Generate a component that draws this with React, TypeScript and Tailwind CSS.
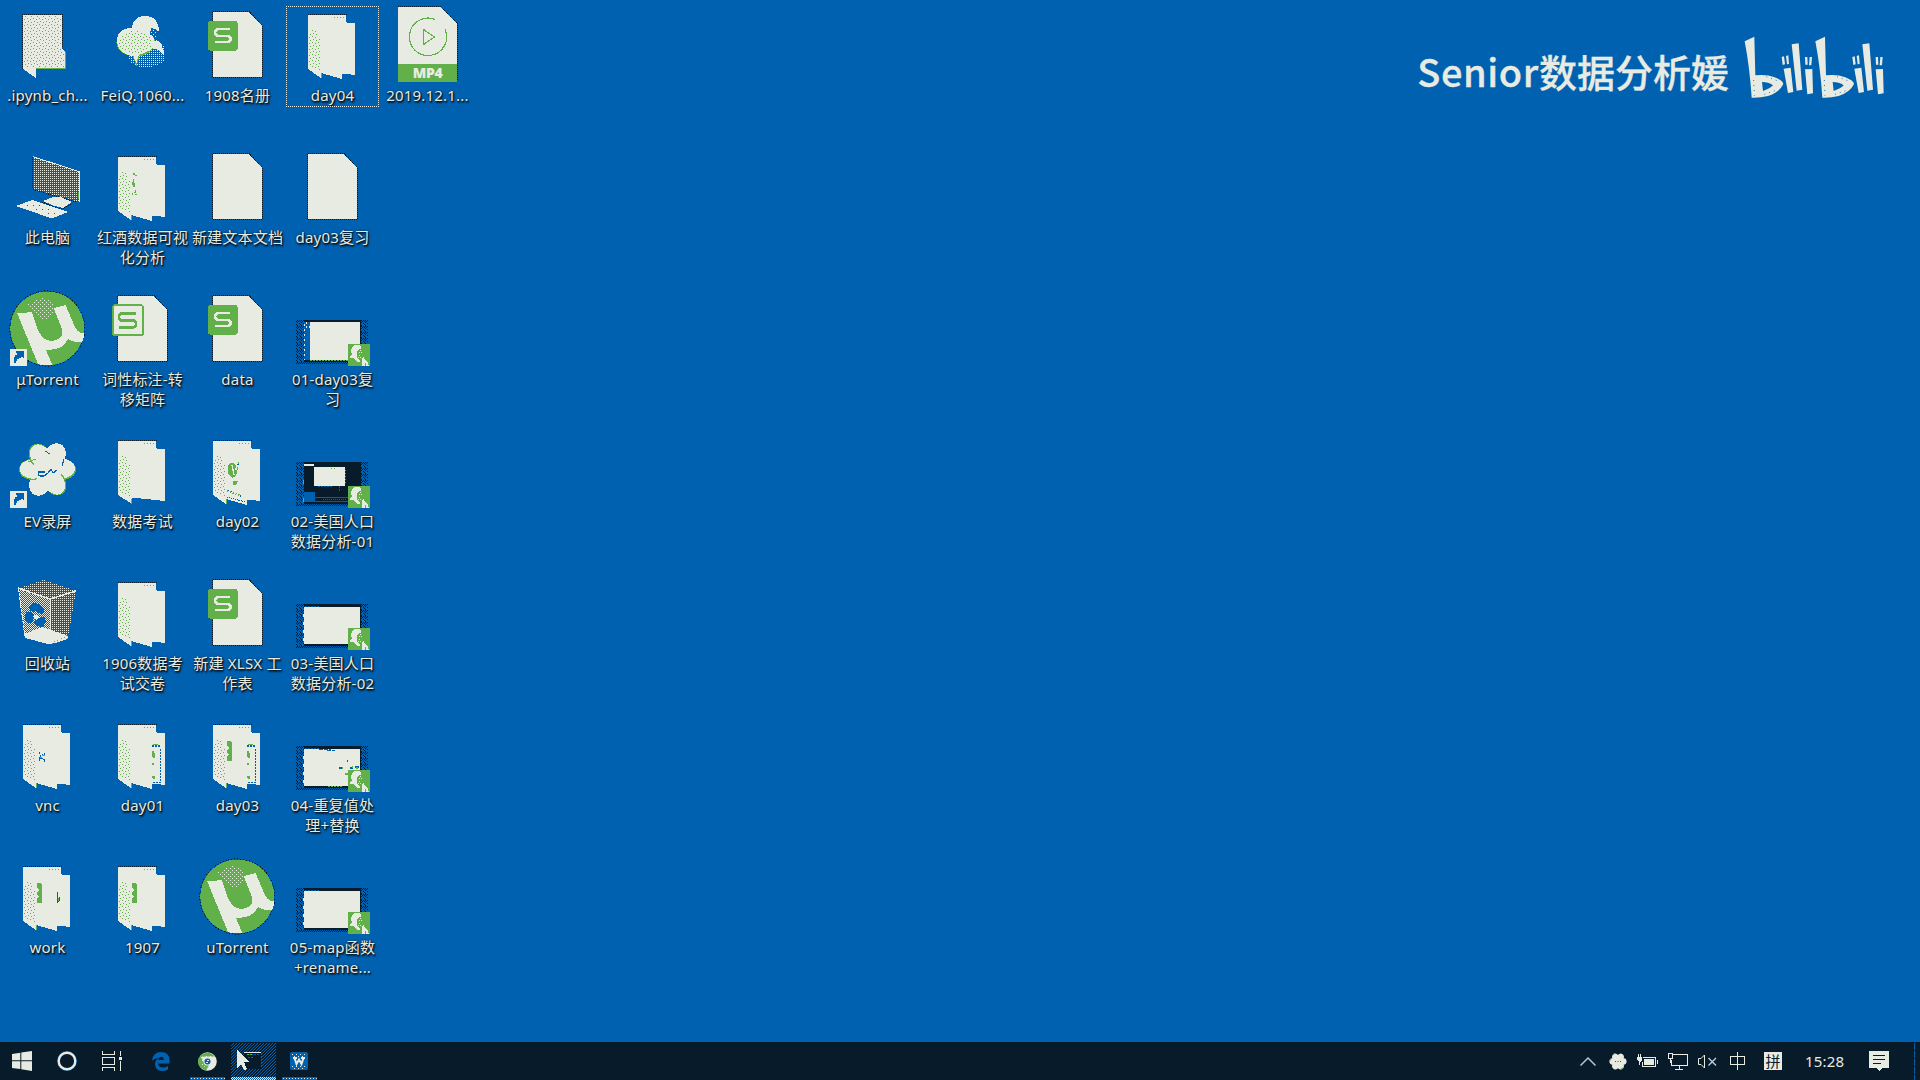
import React from "react";

const W = "#e8ebe2";
const G = "#62b04a";
const B = "#0061b1";
const D = "#081b2b";

function Patterns() {
  return (
    <svg className="absolute size-0" aria-hidden="true">
      <defs>
        <pattern id="gdots" width="6" height="6" patternUnits="userSpaceOnUse">
          <rect x="0" y="1" width="1" height="1" fill={G} />
          <rect x="3" y="0" width="1" height="1" fill={G} />
          <rect x="1" y="4" width="1" height="1" fill={G} />
          <rect x="4" y="3" width="1" height="1" fill={G} />
        </pattern>
        <pattern id="wdots" width="2" height="2" patternUnits="userSpaceOnUse">
          <rect width="1" height="1" fill={W} />
        </pattern>
        <pattern id="wcheck" width="2" height="2" patternUnits="userSpaceOnUse">
          <rect width="1" height="1" fill={W} />
          <rect x="1" y="1" width="1" height="1" fill={W} />
        </pattern>
        <pattern id="wsparse" width="4" height="4" patternUnits="userSpaceOnUse">
          <rect width="1" height="1" fill={W} />
          <rect x="2" y="2" width="1" height="1" fill={W} />
        </pattern>
        <pattern id="film" width="4" height="6" patternUnits="userSpaceOnUse">
          <path d="M0 0h1v1h-1zM2 0h1v1h-1zM1 1h1v1h-1zM3 1h1v1h-1zM0 2h1v1h-1zM2 3h1v1h-1zM3 4h1v1h-1zM0 5h1v1h-1z" fill={D} />
        </pattern>
        <pattern id="hover" width="3" height="3" patternUnits="userSpaceOnUse">
          <path d="M0 0h1v1h-1zM2 1h1v1h-1zM1 2h1v1h-1z" fill={B} />
        </pattern>
      </defs>
    </svg>
  );
}

function Doc() {
  return (
    <g>
      <path d="M22.5 11.5H59L72.5 25.5V77.5H22.5Z" fill="none" stroke={D} strokeDasharray="1 1" />
      <path d="M23 12H58.7L72 26V77H23Z" fill={W} />
    </g>
  );
}

function Sheet({ outline }: { outline?: boolean }) {
  return (
    <g>
      <Doc />
      {outline ? (
        <g>
          <rect x="18" y="21" width="30" height="30" rx="2.500" fill={W} stroke={G} strokeWidth="2" />
          <path d="M41 29.500H27.500Q24 29.500 24 33Q24 36.500 27.500 36.500H37.500Q41 36.500 41 40Q41 43.500 37.500 43.500H23.500" fill="none" stroke={G} strokeWidth="2.600" />
        </g>
      ) : (
        <g>
          <rect x="18" y="21" width="29.700" height="29.700" rx="3" fill={G} />
          <path d="M40 29H28.500Q25 29 25 32.500Q25 36 28.500 36H37Q40.500 36 40.500 39Q40.500 42 37 42H24.500" fill="none" stroke={W} strokeWidth="2.600" />
        </g>
      )}
    </g>
  );
}

function Folder({ children, single }: { children?: React.ReactNode; single?: boolean }) {
  return (
    <g>
      <path d="M23 14.500H61.500" stroke={D} strokeDasharray="1 1" />
      <path
        d={
          single
            ? "M23 15H61V22L63 23H70V75L37 71.500V78L23 69Z"
            : "M23 15H61V22L63 23H70V75L57 73.500V79L36 73V78L23 69Z"
        }
        fill={W}
      />
      <path d="M24 36L29 28L36 42V72L24 66Z" fill="url(#gdots)" />
      <path d="M36.500 72.500V78" stroke={G} />
      <path d="M49 17.500H60" stroke={G} strokeDasharray="1 2" />
      {children}
    </g>
  );
}

function OpenFolder() {
  return (
    <g>
      <path d="M22.500 69V14.500H62.500V48" fill="none" stroke={D} strokeDasharray="1 1" />
      <path d="M23 15H62V49L66 52V68H36V78L23 69Z" fill={W} />
      <path d="M24 16H61V49L64 52V67H24Z" fill="url(#gdots)" />
      <path d="M65.500 52V68M36 68.500H66" stroke={G} />
    </g>
  );
}

function GreenTab() {
  return <path d="M37 31H40.500L42 33V51H37V46L39 45L37 43V40L39 38L37 36Z" fill={G} />;
}

function PageEdge() {
  return (
    <g>
      <path d="M57 35.500H65" stroke={B} strokeWidth="2" strokeDasharray="2 1" />
      <path d="M58 34.500H63" stroke={G} />
      <path d="M57 41H59L60 44V48H58L57 46ZM57 53H59V55H57ZM57 66H60V69H58Z" fill={G} />
      <path d="M65.500 39V72.500H57" fill="none" stroke={B} strokeDasharray="2 1" />
    </g>
  );
}

function Shortcut() {
  return (
    <g>
      <rect x="10" y="65" width="17" height="17" fill={W} />
      <path d="M14 79Q12 72 18 70L15 68L17 67H24V74L22 73L20 74Q16 75 16 79Z" fill={B} />
    </g>
  );
}

function Torrent() {
  return (
    <g>
      <circle cx="47.300" cy="44.500" r="37.600" fill="none" stroke={D} strokeDasharray="1 2" />
      <circle cx="47.300" cy="44.500" r="37" fill={G} />
      <path
        d="M17.300 29.500L32 28L38 46Q43 57 52 57Q60 56 62 51L62.500 46L53.500 24L65.500 21L74 41Q77 49 84 49.300Q84 54 82 58Q74 59 68 55Q63 65 52 65.500L46 66L52.300 81.200Q44 82 38 80Z"
        fill={W}
      />
      <path d="M28 20L40 14L50 16L54 23L52 34L41 36Z" fill="url(#wsparse)" />
    </g>
  );
}

function Badge() {
  return (
    <g>
      <rect x="63" y="60" width="22" height="22" rx="1" fill={G} />
      <path d="M67 64L69 61H74L76 63V65H74L73 67H72V72L73 75L75 76V78H73L70 76L68 74H65V72L67 70L66 67Z" fill={W} />
      <path d="M74 68.500H77M74 71.500H76M73 73.500H77M75 66.500H77" stroke={W} strokeDasharray="1 1" />
      <path d="M77 74L79 73L80 76L82 77L83 79L84 82H77Z" fill={W} />
      <path d="M80.500 79V82" stroke={G} />
    </g>
  );
}

function Film({ variant }: { variant: number }) {
  return (
    <g>
      <rect x="11" y="36" width="72" height="44" fill="url(#film)" />
      <rect x="19" y="36" width="57" height="42" fill={D} />
      {variant === 1 && (
        <g>
          <rect x="19" y="38" width="6" height="38" fill={B} />
          <path d="M19.500 40V76" stroke={W} strokeDasharray="2 3" />
          <path d="M21.500 38V45M24.500 42V46" stroke={W} strokeDasharray="2 2" />
          <rect x="25" y="38" width="50" height="38" fill={W} />
          <path d="M25 76.500H63" stroke={G} strokeDasharray="2 1" />
        </g>
      )}
      {variant === 2 && (
        <g>
          <rect x="19" y="38" width="10" height="2" fill={W} />
          <rect x="29" y="41" width="31" height="19" fill={W} />
          <path d="M46 42.500H51M60.500 44V58" stroke={G} strokeDasharray="1 2" />
          <path d="M54.500 60V66M33 60.500H48" stroke={B} strokeDasharray="2 1" />
          <path d="M19 66H30V71H63V72H30V76H19ZM30 75H63V76H30Z" fill={B} />
          <path d="M38 73.500H62" stroke={B} strokeDasharray="1 1" />
          <path d="M18.500 72V76M18.500 54V58" stroke={G} />
        </g>
      )}
      {variant > 2 && (
        <g>
          <rect x="19" y="39" width="56" height="37" fill={W} />
          <path d="M20 38.500H34" stroke={B} strokeDasharray="2 1" />
          <path d="M18.500 46V73" stroke={W} strokeDasharray="3 5" />
        </g>
      )}
      {variant === 4 && (
        <g>
          <path d="M34 39.500H46M42 40.500H50" stroke={B} strokeDasharray="4 1" />
          <path d="M54 58H58M65 58H68M70 57H74M62 50.500H63" stroke={B} strokeWidth="2" />
          <path d="M57 58H58M67 57H68M60 64H63M71 58H73" stroke={G} strokeWidth="2" />
          <path d="M43 76.500H58" stroke={G} strokeDasharray="2 1" />
        </g>
      )}
      <Badge />
    </g>
  );
}

function Computer() {
  return (
    <g>
      <path d="M33 15L79.700 30L79 60L33 47Z" fill="url(#wdots)" />
      <path d="M33 14.700L79.500 29.700V60" fill="none" stroke={W} />
      <path d="M33 47.500L76 60M32.500 15V47" fill="none" stroke={D} strokeDasharray="1 1" />
      <path d="M78.500 50V57" stroke={G} />
      <path d="M43 59L52 55.500L61 55L72 60L63 66L53 63.500Z" fill={W} />
      <path d="M42 60L52 64L62 67L72 62" fill="none" stroke={D} strokeDasharray="1 1" />
      <path d="M16 64L32 58L68 70L52 76.500Z" fill={W} />
      <path d="M27 63.500H40M36 67.500H54M48 71.500H58" stroke={B} strokeDasharray="1 5" />
    </g>
  );
}

function Bin() {
  return (
    <g>
      <path d="M18 20L43 12L76 23L68 69L50 76L25 69Z" fill="url(#wdots)" />
      <path d="M19 22L50 31V76L25 69Z" fill="url(#wcheck)" />
      <path d="M18 20L50 31L76 23" fill="none" stroke={W} strokeWidth="1.500" />
      <path d="M18.500 21L25 69M50.500 31V62" fill="none" stroke={W} strokeDasharray="3 1" />
      <path d="M25 66L42 59L68 68V71L50 76.500L25 70Z" fill={W} />
      <path d="M52 72L68 67V71L52 76Z" fill="url(#gdots)" />
      <path d="M29 39L34 35L41 37L44 42L43 46L38 45L36 42L33 44L30 43Z" fill={B} />
      <path d="M26 44L32 44L35 48L32 54L28 56L25 51Z" fill={B} />
      <path d="M36 50L44 49L46 54L43 59L37 58L34 54Z" fill={B} />
      <path d="M33 48L37 46L39 50L36 52Z" fill={W} />
    </g>
  );
}

function Flower() {
  const angles = [0, 60, 118, 180, 240, 298];
  return (
    <g>
      {angles.map((a) => (
        <g key={a} transform={`rotate(${a} 47.500 43.500)`}>
          <ellipse cx="62.500" cy="43.500" rx="13.500" ry="10.500" fill={a % 180 < 90 ? G : W} />
          <ellipse cx="62" cy={a === 0 ? 42.5 : 44} rx="13" ry="9.800" fill={W} />
        </g>
      ))}
      <circle cx="47.500" cy="43.500" r="14" fill={W} />
      <path d="M38 46H45M38.500 46V49L40 50H44L48 47L51 43L53 47L57 44" fill="none" stroke={B} strokeWidth="1.200" />
      <path d="M45 25L50 28M64 33L62 40" stroke={B} />
      <path d="M28 36L36 33" stroke={G} />
    </g>
  );
}

function Birds() {
  return (
    <g>
      <path d="M33 58Q40 48 60 48L68 42Q71 55 69 62Q60 68 47 67Q38 67 33 58Z" fill="url(#wdots)" />
      <ellipse cx="40.700" cy="42.500" rx="19.300" ry="14" fill={G} />
      <path d="M22 41Q22 28 37 28Q38 16 51 16Q63 17 64 30L58 36L60 42L56 50L44 55L41.500 64L38 56Q23 54 22 41Z" fill={W} />
      <ellipse cx="40.500" cy="42" rx="17" ry="11" fill="url(#gdots)" />
      <path d="M38 56L41.500 65L44 56" fill="none" stroke={G} />
      <path d="M61 40L65 42Q69 49 69.500 56Q64 49 57 48Z" fill={W} />
      <path d="M56 28L63 30L61 37L55 35Z" fill={B} />
      <path d="M56 29L63 30L61 37L56 35Z" fill="url(#wsparse)" />
    </g>
  );
}

function Mp4() {
  return (
    <g>
      <path d="M18 6.500H60L77 23.500V81" fill="none" stroke={D} strokeDasharray="1 1" />
      <path d="M18 7H60L76.500 23V65H18Z" fill={W} />
      <rect x="18" y="64" width="58.500" height="17.700" fill={G} />
      <path d="M55 19.500A18.700 18.700 0 1 0 65.200 29.500" fill="none" stroke={G} strokeWidth="1.200" />
      <path d="M43.500 29.500L54.500 37L43.500 44.500Z" fill="none" stroke={G} strokeWidth="1.200" />
      <text x="47.800" y="78" textAnchor="middle" fontSize="14" fontWeight="800" fontFamily="Open Sans" fill={W} textLength="30">MP4</text>
    </g>
  );
}

type Item = { icon: React.ReactNode; lines: string[]; focus?: boolean };

const columns: Item[][] = [
  [
    { icon: <OpenFolder />, lines: [".ipynb_ch..."] },
    { icon: <Computer />, lines: ["此电脑"] },
    { icon: <g><Torrent /><Shortcut /></g>, lines: ["μTorrent"] },
    { icon: <g><Flower /><Shortcut /></g>, lines: ["EV录屏"] },
    { icon: <Bin />, lines: ["回收站"] },
    {
      icon: (
        <Folder>
          <path d="M39 42V44M40 45V49M42 44V46M44 43V45M41 48H43M43 49H45M39 47V51M44 50V52" stroke={B} fill="none" />
          <path d="M42 45.500H45M40 47.500H42" stroke={G} />
        </Folder>
      ),
      lines: ["vnc"],
    },
    {
      icon: (
        <Folder>
          <GreenTab />
          <path d="M57.500 40V51M59 45L60 47L58 50" stroke={B} fill="none" />
          <path d="M58.500 46V49" stroke={G} />
        </Folder>
      ),
      lines: ["work"],
    },
  ],
  [
    { icon: <Birds />, lines: ["FeiQ.1060..."] },
    {
      icon: (
        <Folder>
          <path d="M38 31H40V33H38ZM40 33H42V34H40ZM38 37H39V41H40V45H38V43H37V40H38ZM40 48H41V51H38V53H37V51H39V50H40ZM40 52H42V53H40Z" fill={G} />
        </Folder>
      ),
      lines: ["红酒数据可视", "化分析"],
    },
    { icon: <Sheet outline />, lines: ["词性标注-转", "移矩阵"] },
    { icon: <Folder single />, lines: ["数据考试"] },
    { icon: <Folder />, lines: ["1906数据考", "试交卷"] },
    { icon: <Folder><PageEdge /></Folder>, lines: ["day01"] },
    { icon: <Folder><GreenTab /></Folder>, lines: ["1907"] },
  ],
  [
    { icon: <Sheet />, lines: ["1908名册"] },
    { icon: <Doc />, lines: ["新建文本文档"] },
    { icon: <Sheet />, lines: ["data"] },
    {
      icon: (
        <Folder>
          <path d="M38 40Q40 35 45 38L48 42L46 50L42 52L38 47Z" fill={G} />
          <path d="M42 39L44 49M47 38L46 44" stroke={W} strokeWidth="1.500" />
          <path d="M43 55H48L46 59H43Z" fill={G} />
          <path d="M47 38L50 40M37 64L43 66M50 69V71" stroke={B} strokeDasharray="2 1" />
          <path d="M37 65L50 69M48 37H50" stroke={G} strokeWidth="2" strokeDasharray="1 2" />
          <path d="M37 71L56 76" stroke={B} strokeDasharray="1 1" />
        </Folder>
      ),
      lines: ["day02"],
    },
    { icon: <Sheet />, lines: ["新建 XLSX 工", "作表"] },
    { icon: <Folder><GreenTab /><PageEdge /></Folder>, lines: ["day03"] },
    { icon: <Torrent />, lines: ["uTorrent"] },
  ],
  [
    { icon: <Folder />, lines: ["day04"], focus: true },
    { icon: <Doc />, lines: ["day03复习"] },
    { icon: <Film variant={1} />, lines: ["01-day03复", "习"] },
    { icon: <Film variant={2} />, lines: ["02-美国人口", "数据分析-01"] },
    { icon: <Film variant={3} />, lines: ["03-美国人口", "数据分析-02"] },
    { icon: <Film variant={4} />, lines: ["04-重复值处", "理+替换"] },
    { icon: <Film variant={5} />, lines: ["05-map函数", "+rename..."] },
  ],
  [{ icon: <Mp4 />, lines: ["2019.12.1..."] }],
];

function DesktopItem({ item }: { item: Item }) {
  return (
    <div className="relative flex h-[142px] w-[95px] flex-col items-center">
      <svg width="95" height="85" viewBox="0 0 95 85" shapeRendering="crispEdges" className="shrink-0">
        {item.icon}
      </svg>
      <div className="text-center text-[15px] leading-[20px] tracking-[0.2px] whitespace-nowrap text-[#e8ebe2] [text-shadow:1px_1px_1px_#081b2b,1px_2px_2px_#081b2b,0px_0px_2px_#081b2b]">
        {item.lines.map((l) => (
          <div key={l}>{l}</div>
        ))}
      </div>
      {item.focus && <div className="absolute top-[6px] left-px h-[101px] w-[93px] border border-dotted border-[#e8ebe2]" />}
    </div>
  );
}

function BiliLogo() {
  const half = (
    <g>
      <path d="M1035 62L1064 48L1067 164Q1100 160 1125 170Q1150 180 1151 190Q1140 214 1105 226Q1080 232 1056 231Q1050 140 1035 62ZM1087 184L1090 211Q1112 203 1120 194Q1106 184 1087 184Z" fillRule="evenodd" />
      <path d="M1146 109L1153 107L1156 131L1149 133ZM1159 106L1166 104L1168 130L1162 131Z" />
      <path d="M1152 144L1173 141L1181 214L1165 217Z" />
      <path d="M1176 71L1197 68L1208 207L1191 210Z" />
      <path d="M1216 109H1223L1224 132H1217ZM1230 109H1237L1235 134H1228Z" />
      <path d="M1216 146L1238 145L1240 218L1223 221Z" />
    </g>
  );
  return (
    <svg width="140" height="64" viewBox="1033 43 420 192" fill={W}>
      {half}
      <g transform="translate(212 0)">{half}</g>
      <path d="M1062 178L1064 225M1100 168L1138 182M1094 221L1132 208M1274 178L1276 225M1312 168L1350 182M1306 221L1344 208" stroke={B} strokeWidth="2.500" strokeDasharray="3 12" />
    </svg>
  );
}

function TaskView() {
  return (
    <svg width="20" height="20" viewBox="0 0 20 20" shapeRendering="crispEdges" fill="none" stroke={W}>
      <path d="M0.500 0V3.500H12.500V0M0.500 20V16.500H12.500V20M0.500 6.500H12.500V13.500H0.500ZM18.500 0V5M18.500 10V20" />
      <rect x="17" y="6" width="3" height="3" fill={W} stroke="none" />
    </svg>
  );
}

function TaskButton({ children, className = "" }: { children: React.ReactNode; className?: string }) {
  return <div className={`flex h-[38px] shrink-0 items-center justify-center ${className}`}>{children}</div>;
}

function RunningLine() {
  return (
    <svg width="35" height="3" className="absolute bottom-0 left-0">
      <rect width="35" height="3" fill={B} />
      <path d="M1 1.500H35" stroke={W} strokeDasharray="1 2" />
    </svg>
  );
}

function Taskbar() {
  return (
    <div className="flex h-[38px] items-center justify-between bg-[#081b2b]">
      <div className="flex items-center">
        <TaskButton className="w-[44px]">
          <svg width="20" height="20" viewBox="0 0 20 20" fill={W}>
            <path d="M0 3L8.300 1.800V9.300H0ZM9.300 1.600L20 0V9.300H9.300ZM0 10.300H8.300V18L0 17ZM9.300 10.300H20V20L9.300 18.200Z" />
          </svg>
        </TaskButton>
        <TaskButton className="w-[46px]">
          <svg width="20" height="20" viewBox="0 0 20 20" fill="none">
            <circle cx="10" cy="10" r="9" stroke={B} strokeWidth="2" />
            <circle cx="10" cy="10" r="8.300" stroke={W} strokeWidth="2.400" />
          </svg>
        </TaskButton>
        <TaskButton className="w-[44px]"><TaskView /></TaskButton>
        <TaskButton className="w-[56px] pr-[2px]">
          <svg width="18" height="19" viewBox="0 0 18 19">
            <path d="M0 8.500Q1 0 9 0Q17 0 17.500 8V11.500H6Q6.500 15.500 11 15.500Q14 15.500 16 14V17.500Q13 19 10 19Q3 18.500 3 12Q3 8 7 6Q3 6 0 8.500ZM6.200 8H11.800Q11.800 5 9.200 4.800Q6.500 5 6.200 8Z" fillRule="evenodd" fill={B} />
          </svg>
        </TaskButton>
        <TaskButton className="relative w-[35px]">
          <svg width="19" height="19" viewBox="0 0 19 19">
            <circle cx="9.500" cy="9.500" r="9.300" fill={W} />
            <path d="M1.300 5A9.300 9.300 0 0 0 8 18.700L11 13L6 10L2 4Q7 -1 13 1.500L17 4.500H8Z" fill={G} />
            <path d="M3 5L16 3V6L4 17Z" fill="url(#wsparse)" />
            <circle cx="9.500" cy="9.500" r="4" fill={W} />
            <circle cx="9.500" cy="9.500" r="3" fill={B} />
            <path d="M9 8.500H11M8 10.500H10" stroke={W} />
          </svg>
          <RunningLine />
        </TaskButton>
        <TaskButton className="relative ml-[6px] w-[45px]">
          <svg width="45" height="38" viewBox="0 0 45 38" shapeRendering="crispEdges">
            <rect y="1" width="45" height="34" fill="url(#hover)" />
            <rect x="13" y="10" width="18" height="17" fill={D} />
            <path d="M13 10.500H30" stroke={W} />
            <path d="M17 12.500H28M17 15.500H23M30.500 11V26" stroke={B} strokeDasharray="2 1" />
            <path d="M16 12.500H22" stroke={G} strokeDasharray="2 1" />
            <path d="M6 8L18 20H13L16 27L13 28L10 22L6 26Z" fill={W} />
            <rect y="35" width="45" height="3" fill={B} />
            <rect y="35" width="45" height="3" fill="url(#wcheck)" />
          </svg>
        </TaskButton>
        <TaskButton className="relative ml-[6px] w-[35px] pr-px">
          <svg width="18" height="18" viewBox="0 0 18 18">
            <rect width="18" height="18" rx="2" fill={B} />
            <path d="M2 1H16V5H2ZM2 14H16V17H2Z" fill="url(#wsparse)" />
            <path d="M3 6H7M11 6H15M4.500 6L6.500 12L9 7.500L11.500 12L13.500 6" fill="none" stroke={W} strokeWidth="2" />
          </svg>
          <RunningLine />
        </TaskButton>
      </div>
      <div className="flex items-center">
        <svg width="16" height="9" viewBox="0 0 16 9" fill="none"><path d="M0.500 8.500L8 1L15.500 8.500" stroke="#a9c9dc" strokeWidth="1.500" /></svg>
        <svg width="18" height="17" viewBox="0 0 18 17" className="ml-[13px]">
          {[0, 60, 120, 180, 240, 300].map((a) => (
            <ellipse key={a} cx="13.300" cy="8.500" rx="4.300" ry="3.400" fill={W} transform={`rotate(${a} 9 8.500)`} />
          ))}
          <circle cx="9" cy="8.500" r="4.500" fill={W} />
          <path d="M6 8.500H12" stroke={B} strokeDasharray="1 1.500" />
          <path d="M4 1.500L6 0.500M0.500 8L2 6M12 15.500L14 15" stroke={G} />
        </svg>
        <svg width="21" height="14" viewBox="0 0 21 14" className="ml-[10px]" shapeRendering="crispEdges">
          <path d="M5.500 3.500H18.500V12.500H5.500V8M20 6V10" fill="none" stroke={W} />
          <rect x="7" y="5" width="10" height="6" fill={W} />
          <path d="M0 3H5V6L3 8V11H2V8L0 6ZM1 0H2V3H1ZM3 0H4V3H3Z" fill={W} />
        </svg>
        <svg width="20" height="17" viewBox="0 0 20 17" className="ml-[10px]" shapeRendering="crispEdges" fill="none" stroke={W}>
          <path d="M5 1.500H19.500V12.500H3.500V7M11.500 12V16M7 16.500H15M0.500 0.500H4.500V5.500H0.500ZM2.500 6V10" />
        </svg>
        <svg width="19" height="15" viewBox="0 0 19 15" className="ml-[10px]" fill="none" stroke={W}>
          <path d="M0.500 4.500H3L6.500 1V14L3 10.500H0.500Z" />
          <path d="M10.500 4L18 11.500M18 4L10.500 11.500" stroke="#b5d0e0" strokeWidth="1.400" />
        </svg>
        <svg width="15" height="18" viewBox="0 0 15 18" className="ml-[13px]" shapeRendering="crispEdges" fill="none" stroke={W}>
          <path d="M0.500 4.500H14.500V12.500H0.500ZM7.500 0V18" />
        </svg>
        <div className="ml-[19px] flex size-[18px] items-center justify-center bg-[#e8ebe2] text-[15px] leading-[18px] text-[#081b2b]">拼</div>
        <div className="ml-[23px] w-[40px] text-[15px] leading-[20px] tracking-[0.2px] whitespace-nowrap text-[#e8ebe2]">15:28</div>
        <svg width="20" height="20" viewBox="0 0 20 20" className="ml-[24px]" shapeRendering="crispEdges">
          <path d="M0 0H20V17H13L10 20L7 17H0Z" fill={W} />
          <path d="M4 4.500H16M4 8.500H16M4 12.500H12" stroke={D} />
        </svg>
        <svg width="1" height="38" className="mr-[5px] ml-[25px]"><path d="M0.500 1V38" stroke={B} strokeDasharray="7 1" /></svg>
      </div>
    </div>
  );
}

export default function App() {
  return (
    <div className="flex h-[1080px] w-[1920px] flex-col overflow-hidden bg-[#0061b1] [font-family:'Noto_Sans','Noto_Sans_CJK_SC',sans-serif]">
      <Patterns />
      <div className="flex h-[1042px] items-start justify-between">
        <div className="flex">
          {columns.map((col, i) => (
            <div key={i} className="flex flex-col">
              {col.map((item) => (
                <DesktopItem key={item.lines[0]} item={item} />
              ))}
            </div>
          ))}
        </div>
        <div className="mt-[35px] mr-[36px] flex items-start gap-[15px] text-[#e8ebe2]">
          <div className="mt-[8px] text-[38px] leading-[56px] font-medium whitespace-nowrap [-webkit-text-stroke:0.3px_#e8ebe2] [font-family:'Noto_Sans_CJK_SC',sans-serif]">
            <span className="tracking-[0.6px]">Senior</span>数据分析媛
          </div>
          <BiliLogo />
        </div>
      </div>
      <Taskbar />
    </div>
  );
}
